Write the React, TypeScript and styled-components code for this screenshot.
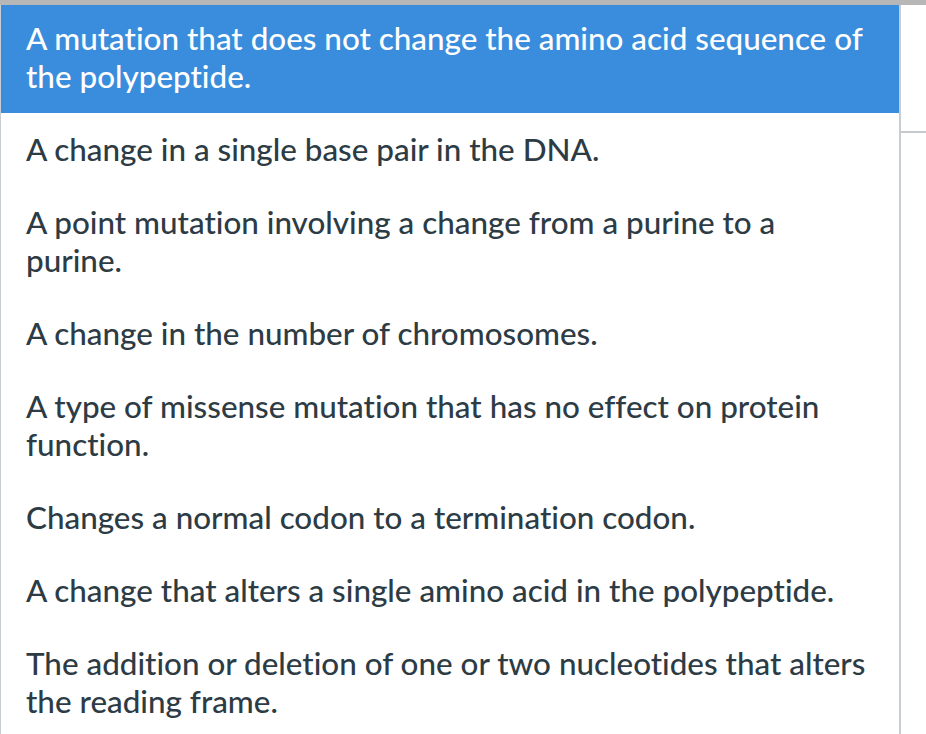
import React from "react";
import styled, { createGlobalStyle } from "styled-components";

const options = [
  "A mutation that does not change the amino acid sequence of the polypeptide.",
  "A change in a single base pair in the DNA.",
  "A point mutation involving a change from a purine to a purine.",
  "A change in the number of chromosomes.",
  "A type of missense mutation that has no effect on protein function.",
  "Changes a normal codon to a termination codon.",
  "A change that alters a single amino acid in the polypeptide.",
  "The addition or deletion of one or two nucleotides that alters the reading frame.",
];

const GlobalStyle = createGlobalStyle`
  html, body {
    margin: 0;
    padding: 0;
    background: #ffffff;
    font-family: Lato, "Open Sans", sans-serif;
    font-variant-ligatures: none;
    overflow: hidden;
  }
`;

const Page = styled.div`
  width: 926px;
  height: 734px;
  display: flex;
  flex-direction: column;
  overflow: hidden;
`;

const TopBar = styled.div`
  position: relative;
  z-index: 1;
  height: 5px;
  flex-shrink: 0;
  background: #b7b7b7;
`;

const Body = styled.div`
  display: flex;
  flex: 1;
  min-height: 0;
`;

/* the list is scrolled a few pixels, so its first row slides under the bar */
const ListBox = styled.ul`
  width: 898px;
  margin: -3px 0 0;
  padding: 0;
  list-style: none;
  border-left: 1px solid #c7cdd1;
  border-right: 2px solid #c7cdd1;
  overflow: hidden;
`;

const Option = styled.li<{ $active?: boolean }>`
  padding: 17px 29px 18px 25px;
  font-size: 31.4px;
  font-weight: 500;
  line-height: 38px;
  color: ${(p) => (p.$active ? "#ffffff" : "#2d3b45")};
  background: ${(p) => (p.$active ? "#3a8ddc" : "transparent")};
`;

const Side = styled.div`
  flex: 1;
  padding-top: 126px;
`;

const Rule = styled.div`
  height: 2px;
  background: #c7cacd;
`;

const App = () => {
  return (
    <>
      <GlobalStyle />
      <Page>
        <TopBar />
        <Body>
          <ListBox>
            {options.map((text, i) => (
              <Option key={i} $active={i === 0}>
                {text}
              </Option>
            ))}
          </ListBox>
          <Side>
            <Rule />
          </Side>
        </Body>
      </Page>
    </>
  );
};

export default App;
